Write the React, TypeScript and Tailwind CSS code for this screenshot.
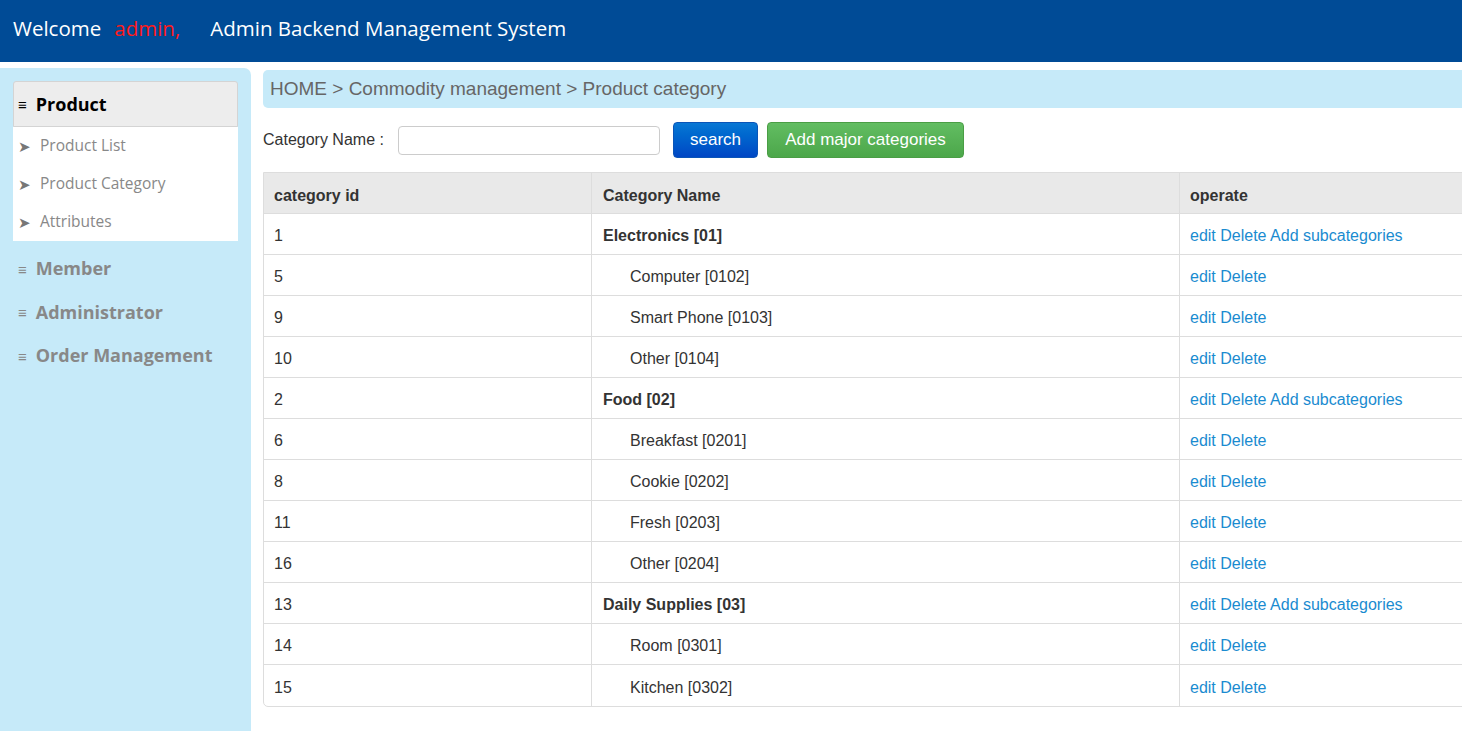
import React from 'react';

const rows = [
  { id: 1, name: 'Electronics [01]', parent: true },
  { id: 5, name: 'Computer [0102]' },
  { id: 9, name: 'Smart Phone [0103]' },
  { id: 10, name: 'Other [0104]' },
  { id: 2, name: 'Food [02]', parent: true },
  { id: 6, name: 'Breakfast [0201]' },
  { id: 8, name: 'Cookie [0202]' },
  { id: 11, name: 'Fresh [0203]' },
  { id: 16, name: 'Other [0204]' },
  { id: 13, name: 'Daily Supplies [03]', parent: true },
  { id: 14, name: 'Room [0301]' },
  { id: 15, name: 'Kitchen [0302]' },
];

const subMenu = ['Product List', 'Product Category', 'Attributes'];
const otherMenus = ['Member', 'Administrator', 'Order Management'];

export default function App() {
  return (
    <div className="w-screen h-[731px] overflow-hidden bg-white font-['Open_Sans',sans-serif]">
      {/* Header */}
      <div className="h-[62px] bg-[#004b96] flex items-center pl-[13px] pb-[6px] text-white text-[20.5px]">
        <span>Welcome</span>
        <span className="ml-[13px] text-[#ff1a1a]">admin,</span>
        <span className="ml-[30px]">Admin Backend Management System</span>
      </div>

      <div className="flex mt-[6px] h-[663px]">
        {/* Sidebar */}
        <div className="w-[251px] shrink-0 bg-[#c6eaf9] rounded-tr-[7px] pt-[13px] px-[13px]">
          <div className="h-[46px] bg-[#ededed] border border-[#d4d4d4] rounded-t-[3px] flex items-center pl-[4px]">
            <span className="text-[15px] text-black mr-[9px]">≡</span>
            <span className="text-[18px] font-bold text-black">Product</span>
          </div>
          <div className="bg-white">
            {subMenu.map((item) => (
              <div key={item} className="h-[38px] flex items-center pl-[5px] text-[15.5px] text-[#888]">
                <span className="text-[15px] mr-[9px] text-[#777]">➤</span>
                <span>{item}</span>
              </div>
            ))}
          </div>
          <div className="pt-[6px]">
            {otherMenus.map((item) => (
              <div key={item} className="h-[43.5px] flex items-center pl-[5px] text-[#888]">
                <span className="text-[15px] mr-[9px]">≡</span>
                <span className="text-[18px] font-bold">{item}</span>
              </div>
            ))}
          </div>
        </div>

        {/* Main */}
        <div className="ml-[12px] w-[1320px] shrink-0 font-['Liberation_Sans',Arial,sans-serif]">
          <div className="h-[38px] mt-[2px] bg-[#c6eaf9] rounded-l-[5px] flex items-center pl-[7px] text-[19px] text-[#666]">
            HOME &gt; Commodity management &gt; Product category
          </div>

          <div className="flex items-center mt-[14px] h-[36px]">
            <span className="w-[135px] text-[16px] text-[#333]">Category Name :</span>
            <input
              type="text"
              className="w-[262px] h-[29px] border border-[#ccc] rounded-[4px] outline-none px-2"
            />
            <button className="ml-[13px] h-[36px] w-[85px] rounded-[4px] border border-[#0a55b8] bg-gradient-to-b from-[#0a78d4] to-[#0046c4] text-white text-[17px]">
              search
            </button>
            <button className="ml-[9px] h-[36px] w-[197px] rounded-[4px] border border-[#4a9e45] bg-gradient-to-b from-[#62bd62] to-[#4ca74a] text-white text-[17px]">
              Add major categories
            </button>
          </div>

          <table className="mt-[14px] w-[1312px] table-fixed border-separate border-spacing-0 border border-[#ddd] rounded-bl-[5px] text-[16px] text-[#333]">
            <thead>
              <tr className="bg-[#e9e9e9] h-[41px]">
                <th className="w-[327px] text-left font-bold pl-[10px] pt-[5px] border-b border-[#ddd]">category id</th>
                <th className="w-[588px] text-left font-bold pl-[11px] pt-[5px] border-b border-l border-[#ddd]">Category Name</th>
                <th className="text-left font-bold pl-[10px] pt-[5px] border-b border-l border-[#ddd]">operate</th>
              </tr>
            </thead>
            <tbody>
              {rows.map((r, i) => {
                const last = i === rows.length - 1;
                const b = last ? '' : 'border-b';
                return (
                  <tr key={r.id} className="h-[41px]">
                    <td className={`pl-[10px] pt-[4px] border-[#ddd] ${b}`}>{r.id}</td>
                    <td className={`pt-[4px] border-l border-[#ddd] ${b} ${r.parent ? 'pl-[11px] font-bold' : 'pl-[38px]'}`}>{r.name}</td>
                    <td className={`pl-[10px] pt-[4px] border-l border-[#ddd] ${b} text-[#1a8bd0]`}>
                      {r.parent ? 'edit Delete Add subcategories' : 'edit Delete'}
                    </td>
                  </tr>
                );
              })}
            </tbody>
          </table>
        </div>
      </div>
    </div>
  );
}
